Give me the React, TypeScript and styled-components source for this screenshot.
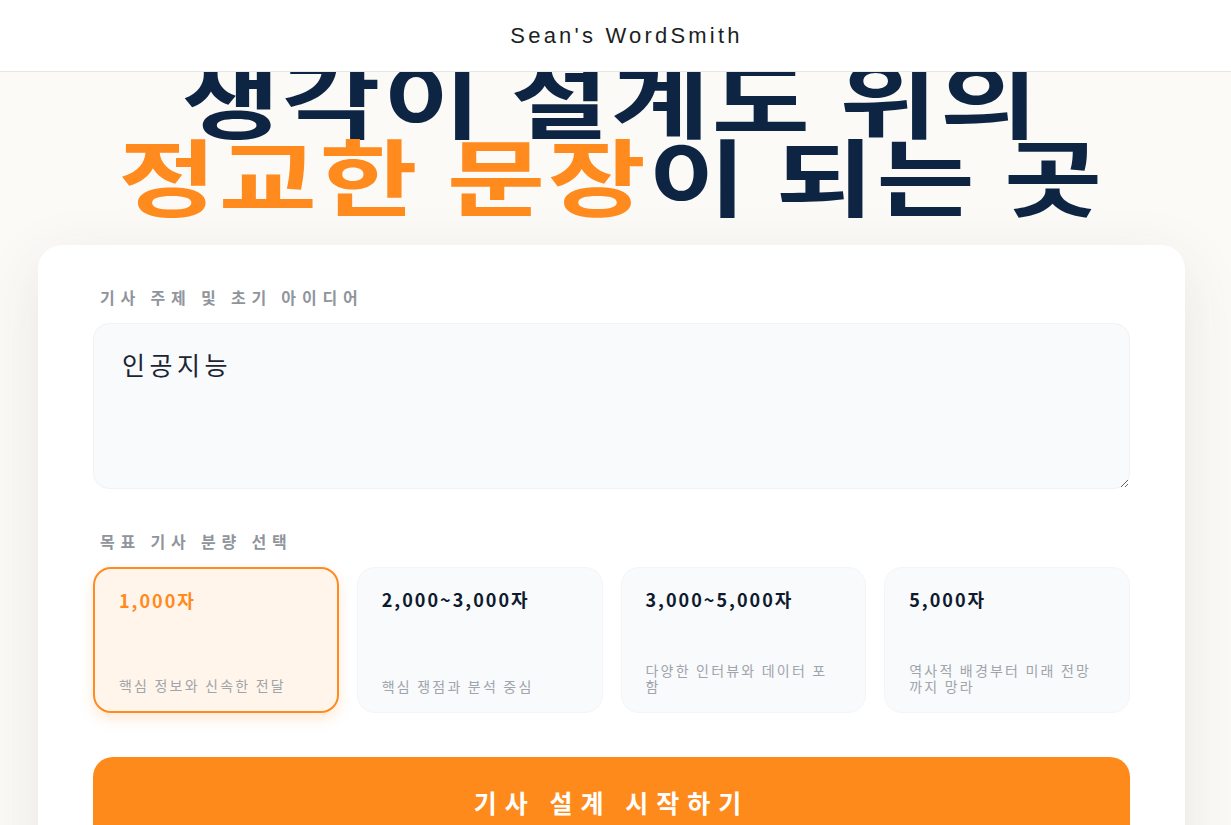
import styled, { createGlobalStyle } from "styled-components";
import { useState } from "react";

const GlobalStyle = createGlobalStyle`
  * {
    box-sizing: border-box;
  }
  body {
    margin: 0;
    background: #fbfaf7;
    font-family: "Noto Sans CJK KR", "Noto Sans", sans-serif;
  }
`;

const LENGTH_OPTIONS = [
  { title: "1,000자", desc: "핵심 정보와 신속한 전달" },
  { title: "2,000~3,000자", desc: "핵심 쟁점과 분석 중심" },
  { title: "3,000~5,000자", desc: "다양한 인터뷰와 데이터 포함" },
  { title: "5,000자", desc: "역사적 배경부터 미래 전망\n까지 망라" },
];

const App: React.FC = () => {
  const [topic, setTopic] = useState("인공지능");
  const [selected, setSelected] = useState(0);

  return (
    <>
      <GlobalStyle />
      <Header>
        <Brand>Sean's WordSmith</Brand>
      </Header>
      <Main>
        <Hero>
          <HeroLine>생각이 설계도 위의</HeroLine>
          <HeroLine>
            <Accent>정교한 문장</Accent>이 되는 곳
          </HeroLine>
        </Hero>

        <FormCard>
          <Section>
            <Label>기사 주제 및 초기 아이디어</Label>
            <TopicInput
              value={topic}
              onChange={(e) => setTopic(e.target.value)}
            />
          </Section>

          <Section>
            <Label>목표 기사 분량 선택</Label>
            <OptionGrid>
              {LENGTH_OPTIONS.map((opt, i) => (
                <OptionCard
                  key={opt.title}
                  $active={selected === i}
                  onClick={() => setSelected(i)}
                >
                  <OptionTitle $active={selected === i}>{opt.title}</OptionTitle>
                  <OptionDesc>{opt.desc}</OptionDesc>
                </OptionCard>
              ))}
            </OptionGrid>
          </Section>

          <StartButton>기사 설계 시작하기</StartButton>
        </FormCard>
      </Main>
    </>
  );
};

const Header = styled.header`
  position: fixed;
  top: 0;
  left: 0;
  right: 0;
  z-index: 10;
  height: 72px;
  display: flex;
  justify-content: center;
  align-items: center;
  padding-left: 22px;
  background: #ffffff;
  border-bottom: 1px solid #e6e6e3;
`;

const Brand = styled.div`
  font-family: "Liberation Sans", Arial, sans-serif;
  font-size: 22px;
  letter-spacing: 3.2px;
  color: #1c1f24;
`;

const Main = styled.main`
  padding: 57px 46px 80px 38px;
`;

const Hero = styled.h1`
  margin: 0;
  display: flex;
  flex-direction: column;
  align-items: center;
  font-size: 84px;
  font-weight: 700;
  line-height: 78px;
  letter-spacing: 2px;
  color: #0e2443;
`;

// the display face is set wide, so each line gets a horizontal stretch
const HeroLine = styled.div`
  display: inline-block;
  white-space: nowrap;
  transform: scaleX(1.27);
  transform-origin: 50% 50%;
`;

const Accent = styled.span`
  color: #ff8a1e;
`;

const FormCard = styled.section`
  margin-top: 32px;
  background: #ffffff;
  border-radius: 24px;
  padding: 41px 55px 60px;
  box-shadow: 0 16px 60px rgba(60, 55, 40, 0.1);
  display: flex;
  flex-direction: column;
  gap: 41px;
`;

const Section = styled.div`
  display: flex;
  flex-direction: column;
  gap: 15px;
`;

const Label = styled.div`
  padding-left: 7px;
  font-size: 16px;
  font-weight: 700;
  line-height: 22px;
  letter-spacing: 5.8px;
  color: #90959c;
`;

const TopicInput = styled.textarea`
  height: 166px;
  padding: 22px 28px;
  border: 1px solid #f0f2f5;
  border-radius: 16px;
  background: #f8fafc;
  font-family: "Noto Sans CJK KR", "Noto Sans", sans-serif;
  font-size: 25px;
  line-height: 36px;
  letter-spacing: 4.5px;
  color: #1b2433;
  resize: vertical;
  outline: none;
`;

const OptionGrid = styled.div`
  display: grid;
  grid-template-columns: repeat(4, 1fr);
  gap: 18px;
`;

const OptionCard = styled.button<{ $active: boolean }>`
  height: 146px;
  display: flex;
  flex-direction: column;
  justify-content: space-between;
  align-items: flex-start;
  text-align: left;
  padding: 19px 24px 18px;
  border-radius: 18px;
  cursor: pointer;
  font-family: inherit;
  border: ${(p) => (p.$active ? "2.5px solid #ff8c22" : "1px solid #f3f5f8")};
  background: ${(p) => (p.$active ? "#fff5ea" : "#f8fafc")};
  box-shadow: ${(p) =>
    p.$active ? "0 6px 14px rgba(255, 140, 34, 0.18)" : "none"};
`;

const OptionTitle = styled.div<{ $active: boolean }>`
  font-size: 18px;
  font-weight: 700;
  line-height: 25px;
  letter-spacing: 2px;
  color: ${(p) => (p.$active ? "#ff8a1e" : "#0f1a2e")};
`;

const OptionDesc = styled.div`
  font-size: 14px;
  line-height: 16px;
  letter-spacing: 2.2px;
  color: #a0a4ab;
  white-space: pre-line;
`;

const StartButton = styled.button`
  height: 90px;
  margin-top: 3px;
  border: none;
  border-radius: 20px;
  background: #ff8a1c;
  color: #ffffff;
  font-family: "Noto Sans CJK KR", "Noto Sans", sans-serif;
  font-size: 25px;
  font-weight: 700;
  letter-spacing: 8px;
  cursor: pointer;
`;

export default App;
